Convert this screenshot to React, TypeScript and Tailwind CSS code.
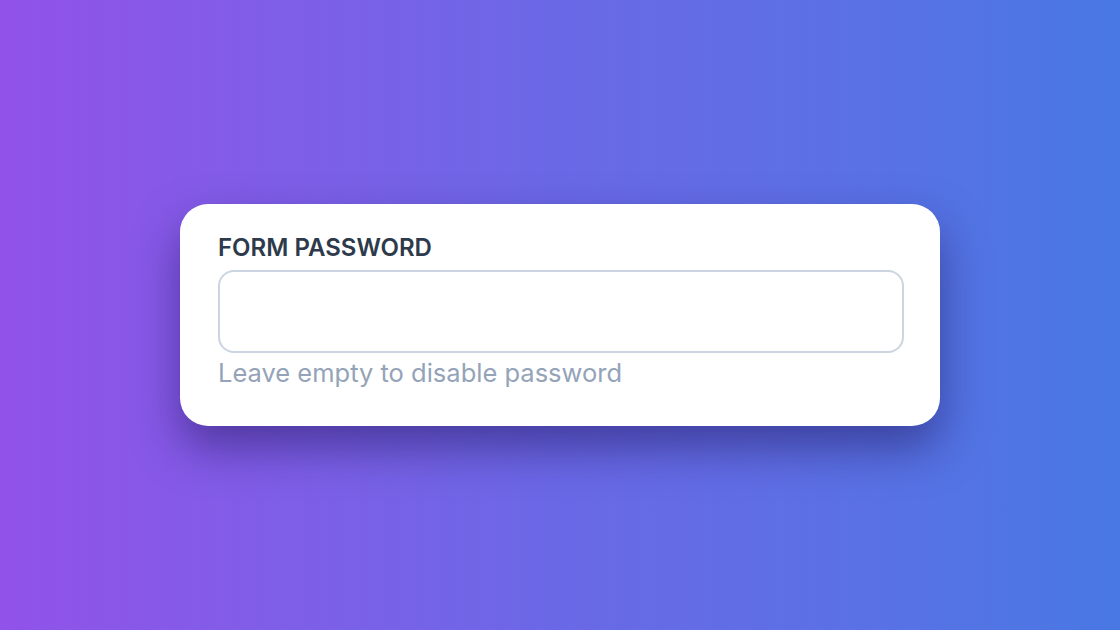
export default function App() {
  return (
    <div
      className="w-[1120px] h-[630px] flex items-center justify-center bg-gradient-to-r from-[#9152e9] via-[#6a68e6] to-[#4878e3]"
      style={{ fontFamily: "Inter, 'Noto Sans', sans-serif" }}
    >
      <div className="w-[760px] bg-white rounded-[28px] pl-[38px] pr-[36px] pt-[28px] pb-[37px] shadow-[0_22px_45px_rgba(30,20,90,0.5)]">
        <label className="block text-[24px] leading-[32px] font-semibold text-[#2d3a4b] mb-[6px]">
          FORM PASSWORD
        </label>
        <input
          type="password"
          className="block w-full h-[83px] rounded-[16px] border-2 border-[#cbd5e1] bg-white outline-none"
        />
        <p className="mt-[4px] text-[25.5px] leading-[32px] text-[#94a3b8]">
          Leave empty to disable password
        </p>
      </div>
    </div>
  );
}
